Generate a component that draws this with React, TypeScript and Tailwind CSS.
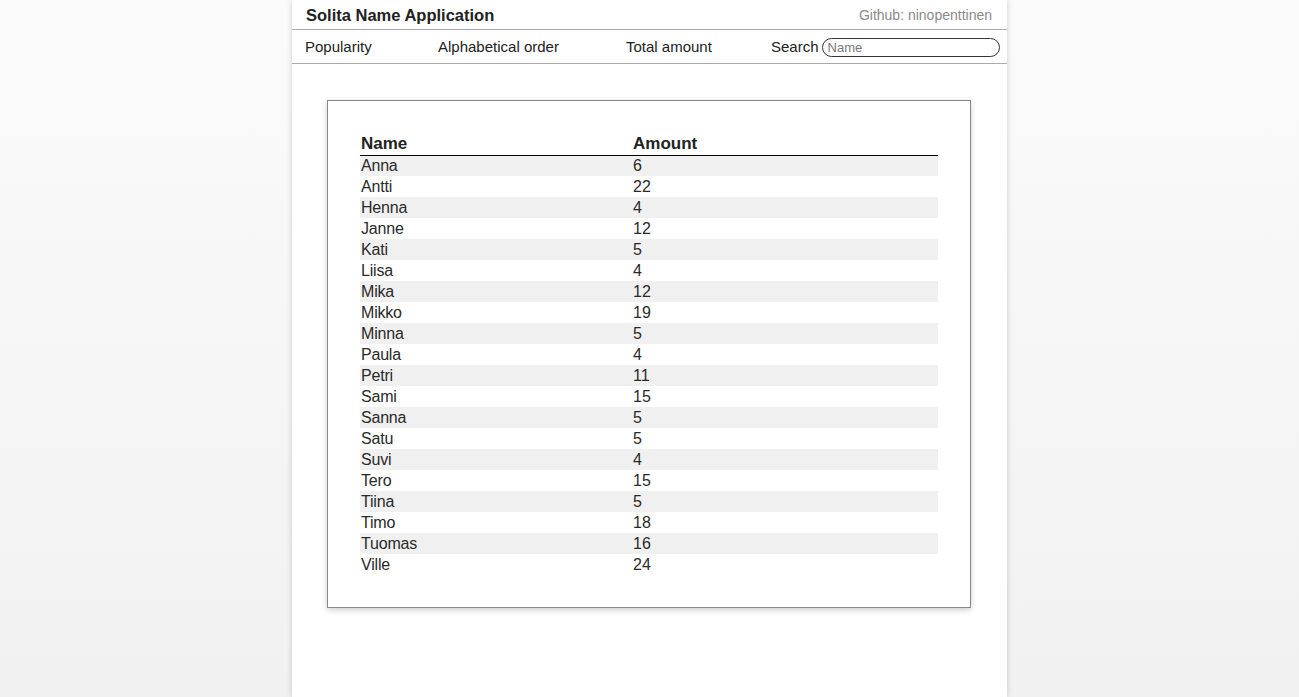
import React from "react";

const rows: [string, number][] = [
  ["Anna", 6],
  ["Antti", 22],
  ["Henna", 4],
  ["Janne", 12],
  ["Kati", 5],
  ["Liisa", 4],
  ["Mika", 12],
  ["Mikko", 19],
  ["Minna", 5],
  ["Paula", 4],
  ["Petri", 11],
  ["Sami", 15],
  ["Sanna", 5],
  ["Satu", 5],
  ["Suvi", 4],
  ["Tero", 15],
  ["Tiina", 5],
  ["Timo", 18],
  ["Tuomas", 16],
  ["Ville", 24],
];

export default function App() {
  return (
    <div
      className="min-h-screen w-full bg-gradient-to-b from-[#fbfbfb] to-[#f1f1f1] flex justify-center"
      style={{ fontFamily: '"Liberation Sans", Arial, sans-serif' }}
    >
      <div className="w-[715px] min-h-screen bg-white shadow-[0_0_6px_rgba(0,0,0,0.18)] text-[#222]">
        <div className="h-[30px] flex items-center justify-between pl-[14px] pr-[15px] border-b border-[#aaa]">
          <span className="text-[16.5px] font-bold leading-none pt-[1px]">Solita Name Application</span>
          <span className="text-[14px] text-[#8a8a8a] leading-none">Github: ninopenttinen</span>
        </div>
        <div className="h-[34px] flex items-center pl-[13px] border-b border-[#aaa] text-[15px] pt-[1px]">
          <span className="w-[133px]">Popularity</span>
          <span className="w-[188px]">Alphabetical order</span>
          <span className="w-[145px]">Total amount</span>
          <span className="flex items-center">
            <span className="mr-[3px]">Search</span>
            <input
              placeholder="Name"
              className="w-[178px] h-[19px] rounded-full border border-[#333] px-[5px] text-[13px] leading-none placeholder:text-[#777] outline-none"
            />
          </span>
        </div>
        <div className="mt-[36px] ml-[35px] mr-[36px] border border-[#888] shadow-[0_2px_6px_rgba(0,0,0,0.2)] p-[32px]">
          <table className="w-full border-collapse">
            <thead>
              <tr className="border-b border-black">
                <th className="w-[273px] text-left text-[17px] font-bold h-[22px] leading-none pt-[1px] pb-[1px] pl-[1px]">Name</th>
                <th className="text-left text-[17px] font-bold leading-none pt-[1px] pb-[1px]">Amount</th>
              </tr>
            </thead>
            <tbody>
              {rows.map(([n, a], i) => (
                <tr key={n} className={i % 2 === 0 ? "bg-[#f0f0f0]" : "bg-white"}>
                  <td className="h-[21px] text-[16px] leading-none pl-[1px] tracking-[-0.2px] text-[#2a2a2a]">{n}</td>
                  <td className="h-[21px] text-[16px] leading-none text-[#2a2a2a]">{a}</td>
                </tr>
              ))}
            </tbody>
          </table>
        </div>
      </div>
    </div>
  );
}
